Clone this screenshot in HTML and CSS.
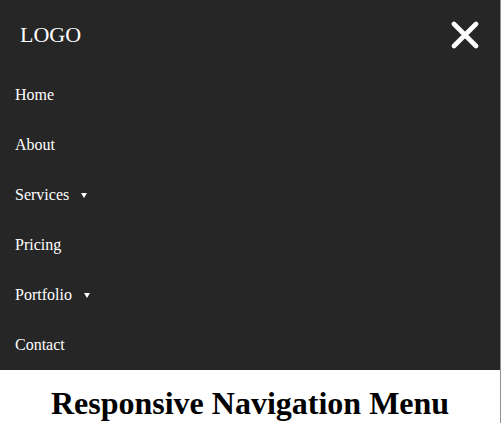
FILE: index.html
```html
<!DOCTYPE html>
<html lang="en">
<head>
<meta charset="utf-8">
<title>Responsive Navigation Menu</title>
<link rel="stylesheet" href="styles.css">
</head>
<body>
<div class="page">
  <nav class="navbar">
    <div class="nav-header">
      <div class="logo">LOGO</div>
      <button class="close" aria-label="Close menu">
        <svg width="28" height="28" viewBox="0 0 28 28"><path d="M3 3 L25 25 M25 3 L3 25" stroke="#fff" stroke-width="4.6" stroke-linecap="round" fill="none"/></svg>
      </button>
    </div>
    <ul class="menu">
      <li class="item"><a href="#">Home</a></li>
      <li class="item"><a href="#">About</a></li>
      <li class="item"><a href="#">Services<span class="caret"></span></a></li>
      <li class="item"><a href="#">Pricing</a></li>
      <li class="item"><a href="#">Portfolio<span class="caret"></span></a></li>
      <li class="item"><a href="#">Contact</a></li>
    </ul>
  </nav>
  <h1 class="title">Responsive Navigation Menu</h1>
</div>
</body>
</html>
```
FILE: styles.css
```css
html, body {
  margin: 0;
  padding: 0;
  background: #fff;
}
body {
  font-family: "Liberation Serif", "Times New Roman", serif;
  overflow: hidden;
}
.page {
  width: 500px;
  height: 423px;
  border-right: 1px solid #8c919b;
}
.navbar {
  background: #262626;
  color: #fff;
}
.nav-header {
  height: 70px;
  display: flex;
  align-items: center;
  justify-content: space-between;
  padding: 0 21px 0 20px;
}
.logo {
  font-size: 22px;
}
.close {
  background: none;
  border: 0;
  padding: 0;
  display: flex;
  width: 28px;
  height: 28px;
  cursor: pointer;
}
.menu {
  list-style: none;
  margin: 0;
  padding: 0;
}
.item {
  height: 50px;
  display: flex;
  align-items: center;
  padding-left: 15px;
}
.item a {
  color: #fff;
  text-decoration: none;
  font-size: 16px;
  display: flex;
  align-items: center;
}
.caret {
  display: inline-block;
  margin-left: 12px;
  width: 0;
  height: 0;
  border-left: 3px solid transparent;
  border-right: 3px solid transparent;
  border-top: 5px solid #fff;
}
.title {
  margin: 15px 0 0;
  font-size: 32px;
  font-weight: bold;
  text-align: center;
  color: #000;
}
```
